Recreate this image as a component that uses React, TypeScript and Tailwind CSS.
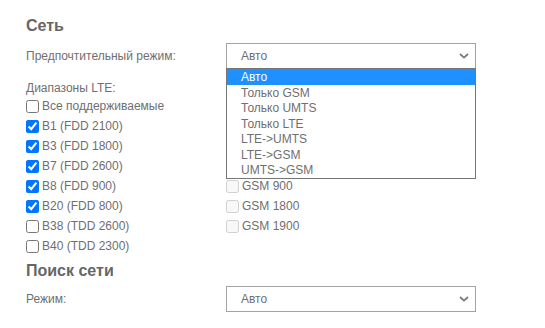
import React from 'react'

const modes = ['Авто', 'Только GSM', 'Только UMTS', 'Только LTE', 'LTE->UMTS', 'LTE->GSM', 'UMTS->GSM']

const lteBands = [
  { label: 'Все поддерживаемые', checked: false },
  { label: 'B1 (FDD 2100)', checked: true },
  { label: 'B3 (FDD 1800)', checked: true },
  { label: 'B7 (FDD 2600)', checked: true },
  { label: 'B8 (FDD 900)', checked: true },
  { label: 'B20 (FDD 800)', checked: true },
  { label: 'B38 (TDD 2600)', checked: false },
  { label: 'B40 (TDD 2300)', checked: false },
]

// rows above these are hidden behind the open dropdown
const gsmBands = ['GSM 900', 'GSM 1800', 'GSM 1900']

function Chevron() {
  return (
    <svg width="10" height="6" viewBox="0 0 10 6" className="shrink-0">
      <polyline points="1,1 5,4.6 9,1" fill="none" stroke="#7a7a7a" strokeWidth="1.8" />
    </svg>
  )
}

function SelectBox({ value, open }: { value: string; open?: boolean }) {
  return (
    <div className="relative w-[250px]">
      <div className="flex h-[26px] items-center justify-between border border-[#a3a3a3] bg-white pl-[14px] pr-[6px] text-[12px] text-[#6f6f6f]">
        <span>{value}</span>
        <Chevron />
      </div>
      {open && (
        <div className="absolute left-0 top-[25px] z-10 w-[250px] border border-[#767676] bg-white text-[12px]">
          {modes.map((m, i) => (
            <div
              key={m}
              className={
                i === 0
                  ? 'flex h-[16px] items-center bg-[#1e90ff] pl-[14px] text-white'
                  : 'flex h-[15.5px] items-center pl-[14px] text-[#6f6f6f]'
              }
            >
              {m}
            </div>
          ))}
        </div>
      )}
    </div>
  )
}

function CheckRow({ label, checked, disabled }: { label: string; checked?: boolean; disabled?: boolean }) {
  return (
    <label className="flex h-[20px] items-center gap-[3px] text-[12px] text-[#6f6f6f]">
      <input type="checkbox" defaultChecked={checked} disabled={disabled} className="m-0 h-[13px] w-[13px]" />
      <span>{label}</span>
    </label>
  )
}

export default function App() {
  return (
    <div className="h-[328px] w-[545px] bg-white pl-[26px] pt-[16px] font-['Liberation_Sans',Arial,sans-serif]">
      <h2 className="h-[20px] text-[16px] font-bold leading-[20px] text-[#666]">Сеть</h2>

      {/* Preferred mode */}
      <div className="mt-[7px] flex items-center">
        <div className="w-[200px] text-[12px] text-[#6f6f6f]">Предпочтительный режим:</div>
        <SelectBox value="Авто" open />
      </div>

      {/* Bands */}
      <div className="mt-[11px] flex">
        <div className="w-[200px]">
          <div className="h-[16px] text-[12px] leading-[16px] text-[#6f6f6f]">Диапазоны LTE:</div>
          {lteBands.map((b) => (
            <CheckRow key={b.label} label={b.label} checked={b.checked} />
          ))}
        </div>
        <div className="pt-[96px]">
          {gsmBands.map((b) => (
            <CheckRow key={b} label={b} disabled />
          ))}
        </div>
      </div>

      <h2 className="mt-[5px] h-[20px] text-[16px] font-bold leading-[20px] text-[#666]">Поиск сети</h2>

      <div className="mt-[5px] flex items-center">
        <div className="w-[200px] text-[12px] text-[#6f6f6f]">Режим:</div>
        <SelectBox value="Авто" />
      </div>
    </div>
  )
}
